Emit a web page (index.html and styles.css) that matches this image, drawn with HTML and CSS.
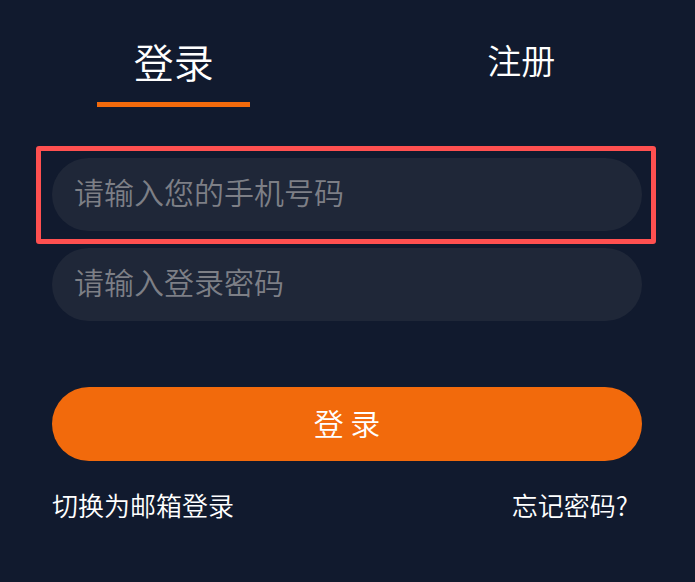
FILE: index.html
```html
<!DOCTYPE html>
<html lang="zh-CN">
<head>
<meta charset="utf-8">
<link rel="stylesheet" href="styles.css">
</head>
<body>
<div class="page">
  <div class="tabs">
    <div class="tab active"><span class="tab-label">登录</span><span class="tab-bar"></span></div>
    <div class="tab"><span class="tab-label tab-label-sm">注册</span></div>
  </div>
  <div class="form">
    <div class="field field-highlight">
      <div class="input">请输入您的手机号码</div>
      <div class="highlight"></div>
    </div>
    <div class="field">
      <div class="input">请输入登录密码</div>
    </div>
    <div class="btn">登 录</div>
    <div class="links">
      <span class="link">切换为邮箱登录</span>
      <span class="link link-right">忘记密码?</span>
    </div>
  </div>
</div>
</body>
</html>
```
FILE: styles.css
```css
html, body {
  margin: 0;
  padding: 0;
  background: #111a2e;
}
body {
  font-family: "Noto Sans CJK SC", "Noto Sans", sans-serif;
  font-weight: 350;
  color: #ffffff;
  width: 695px;
  height: 582px;
  overflow: hidden;
}
.page {
  display: flex;
  flex-direction: column;
}
.tabs {
  display: flex;
  height: 124px;
}
.tab {
  flex: 1;
  display: flex;
  flex-direction: column;
  align-items: center;
}
.tab-label {
  font-size: 40px;
  line-height: 40px;
  margin-top: 41px;
  height: 40px;
}
.tab-label-sm {
  font-size: 34px;
  line-height: 34px;
  margin-top: 43px;
}
.tab-bar {
  width: 153px;
  height: 5px;
  background: #f26a0c;
  margin-top: 21px;
}
.form {
  display: flex;
  flex-direction: column;
  padding: 34px 53px 0 52px;
}
.field {
  position: relative;
  margin-bottom: 17px;
}
.input {
  height: 73px;
  border-radius: 37px;
  background: #1f2738;
  color: #7d7f86;
  font-size: 30px;
  line-height: 30px;
  padding: 0 20px 0 22px;
  display: flex;
  align-items: center;
  padding-bottom: 8px;
  box-sizing: border-box;
}
.highlight {
  position: absolute;
  left: -16px;
  top: -12px;
  right: -14px;
  bottom: -13px;
  border: 5px solid #ff5050;
  border-radius: 3px;
  pointer-events: none;
}
.btn {
  margin-top: 49px;
  height: 74px;
  border-radius: 37px;
  background: #f26a0c;
  color: #ffffff;
  font-size: 30px;
  display: flex;
  align-items: center;
  justify-content: center;
  padding-bottom: 4px;
  box-sizing: border-box;
}
.links {
  display: flex;
  justify-content: space-between;
  margin-top: 26px;
  font-size: 26px;
  line-height: 36px;
}
.link-right {
  margin-right: 14px;
}
```
